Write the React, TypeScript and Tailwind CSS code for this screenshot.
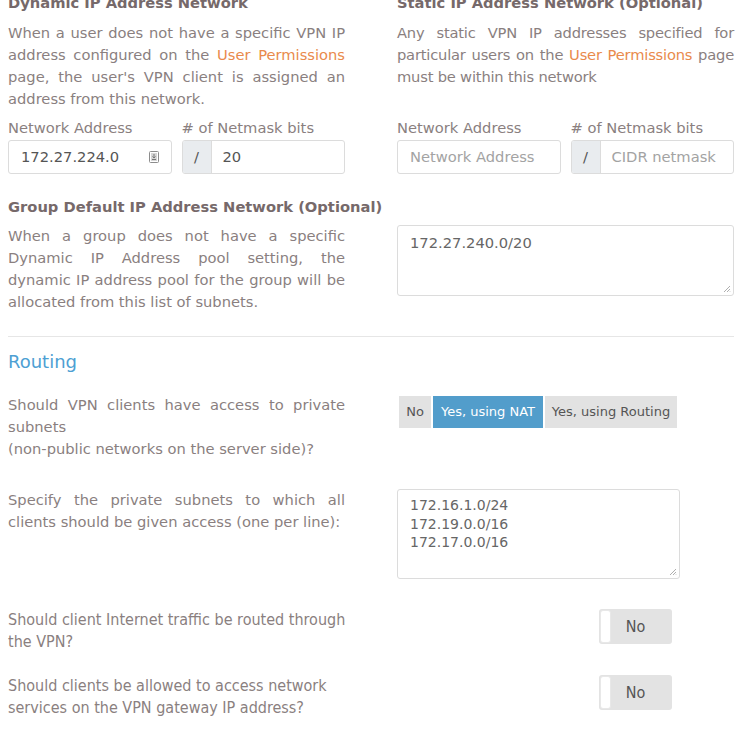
import { useState } from 'react'

const body = "font-['DejaVu_Sans',Verdana,sans-serif]"
const narrow = "font-['DejaVu_Sans_Condensed','Liberation_Sans_Narrow','DejaVu_Sans',sans-serif] [font-stretch:condensed]"

function Heading({ children }: { children: React.ReactNode }) {
  return <h3 className="text-[14.7px] font-bold leading-[22px] text-[#76696a]">{children}</h3>
}

function Link({ children }: { children: React.ReactNode }) {
  return <a className="text-[#e98a4c] cursor-pointer">{children}</a>
}

function KeyIcon() {
  // little credential-manager glyph drawn inside the address field
  return (
    <svg width="10" height="12" viewBox="0 0 10 12" className="shrink-0">
      <rect x="0.5" y="0.5" width="9" height="11" rx="1" fill="#fff" stroke="#8c8c8c" />
      <rect x="2" y="2" width="6" height="8" fill="#d6d6d6" />
      <path d="M5 3v4M3.5 5.5 5 7l1.5-1.5M3 8.5h4" stroke="#777" strokeWidth="1" fill="none" />
    </svg>
  )
}

function NetFields({ addr, bits }: { addr?: string; bits?: string }) {
  return (
    <div className="grid grid-cols-2 gap-[10px]">
      <div>
        <div className="leading-[22px] mb-[1px]">Network Address</div>
        <div className="h-[34px] flex items-center border border-[#dcdcdc] rounded-[3px] px-3 bg-white">
          {addr ? (
            <>
              <span className="flex-1 text-[#555]">{addr}</span>
              <KeyIcon />
            </>
          ) : (
            <span className="flex-1 text-[#a3a3a3]">Network Address</span>
          )}
        </div>
      </div>
      <div>
        <div className="leading-[22px] mb-[1px]">
          # of Netmask bits
        </div>
        <div className="h-[34px] flex border border-[#dcdcdc] rounded-[3px] bg-white overflow-hidden">
          <span className="w-[29px] flex items-center justify-center bg-[#e9ecef] border-r border-[#dcdcdc] text-[#555]">/</span>
          <span className={`flex-1 flex items-center px-[11px] ${bits ? 'text-[#555]' : 'text-[#a3a3a3]'}`}>
            {bits ?? 'CIDR netmask'}
          </span>
        </div>
      </div>
    </div>
  )
}

function Grip() {
  return (
    <svg width="8" height="8" viewBox="0 0 8 8" className="absolute right-[2px] bottom-[2px]">
      <path d="M7 1 1 7M7 4 4 7M7 6.5 6.5 7" stroke="#9a9a9a" strokeWidth="0.8" />
    </svg>
  )
}

function Toggle() {
  const [on, setOn] = useState(false)
  return (
    <button
      onClick={() => setOn(v => !v)}
      className={`relative w-[73px] h-[35px] rounded-[3px] bg-[#e3e3e3] flex items-center justify-center ${narrow}`}
    >
      <span className="absolute left-[1px] top-[1px] bottom-[1px] w-[11px] bg-white rounded-[3px] border border-[#e8e8e8]" />
      <span className="text-[16px] text-[#555]">{on ? 'Yes' : 'No'}</span>
    </button>
  )
}

export default function App() {
  const [mode, setMode] = useState('nat')
  const modes = [
    { id: 'no', label: 'No', w: 'w-[32px]' },
    { id: 'nat', label: 'Yes, using NAT', w: 'w-[110px]' },
    { id: 'route', label: 'Yes, using Routing', w: 'w-[132px]' },
  ]

  return (
    <div className={`w-[737px] h-[750px] overflow-hidden bg-white pl-2 pr-[3px] text-[14.7px] leading-[22px] text-[#8a7f7f] ${body}`}>
      <div className="-mt-2">
        {/* address pools */}
        <div className="grid grid-cols-[337px_337px] gap-x-[52px]">
          <div className="flex flex-col">
            <Heading>Dynamic IP Address Network</Heading>
            <p className="mt-2 text-justify">
              When a user does not have a specific VPN IP address configured on the <Link>User Permissions</Link> page,
              the user's VPN client is assigned an address from this network.
            </p>
            <div className="mt-[7px]">
              <NetFields addr="172.27.224.0" bits="20" />
            </div>
          </div>
          <div className="flex flex-col">
            <Heading>Static IP Address Network (Optional)</Heading>
            <p className="mt-2 text-justify tracking-[-0.2px]">
              Any static VPN IP addresses specified for particular users on the <Link>User Permissions</Link> page
              must be within this network
            </p>
            <div className="mt-auto">
              <NetFields />
            </div>
          </div>
        </div>

        <div className="mt-[22px]">
          <Heading>Group Default IP Address Network (Optional)</Heading>
          <div className="mt-[7px] grid grid-cols-[337px_337px] gap-x-[52px]">
            <p className="text-justify">
              When a group does not have a specific Dynamic IP Address pool setting, the dynamic IP address pool for the
              group will be allocated from this list of subnets.
            </p>
            <div className="relative h-[71px] border border-[#dcdcdc] rounded-[3px] px-3 pt-[6px] text-[#666]">
              172.27.240.0/20
              <Grip />
            </div>
          </div>
        </div>

        <hr className="mt-[23px] border-t border-[#e6e6e6]" />

        {/* routing */}
        <h2 className="mt-[13px] text-[18px] leading-[24px] text-[#4e9fd3]">Routing</h2>

        <div className="mt-[20px] grid grid-cols-[337px_337px] gap-x-[52px]">
          <p className="text-justify">
            Should VPN clients have access to private subnets
            <br />
            (non-public networks on the server side)?
          </p>
          <div className="pt-[2px] pl-[2px] flex gap-[2px] h-fit text-[13px]">
            {modes.map(m => (
              <button
                key={m.id}
                onClick={() => setMode(m.id)}
                className={`${m.w} h-[32px] flex items-center justify-center ${
                  mode === m.id ? 'bg-[#529dcb] text-white' : 'bg-[#e2e2e2] text-[#555]'
                }`}
              >
                {m.label}
              </button>
            ))}
          </div>
        </div>

        <div className="mt-[29px] grid grid-cols-[337px_337px] gap-x-[52px]">
          <p className="text-justify">
            Specify the private subnets to which all clients should be given access (one per line):
          </p>
          <div className="relative w-[283px] h-[90px] border border-[#dcdcdc] rounded-[3px] px-3 pt-[6px] leading-[18.5px] text-[14px] text-[#666]">
            172.16.1.0/24
            <br />
            172.19.0.0/16
            <br />
            172.17.0.0/16
            <Grip />
          </div>
        </div>

        <div className={`mt-[30px] grid grid-cols-[590px_1fr] text-[16px] ${narrow}`}>
          <p className="w-[350px]">Should client Internet traffic be routed through the VPN?</p>
          <div className="pl-[1px]">
            <Toggle />
          </div>
        </div>

        <div className={`mt-[22px] grid grid-cols-[590px_1fr] text-[16px] ${narrow}`}>
          <p className="w-[350px]">Should clients be allowed to access network services on the VPN gateway IP address?</p>
          <div className="pl-[1px]">
            <Toggle />
          </div>
        </div>
      </div>
    </div>
  )
}
